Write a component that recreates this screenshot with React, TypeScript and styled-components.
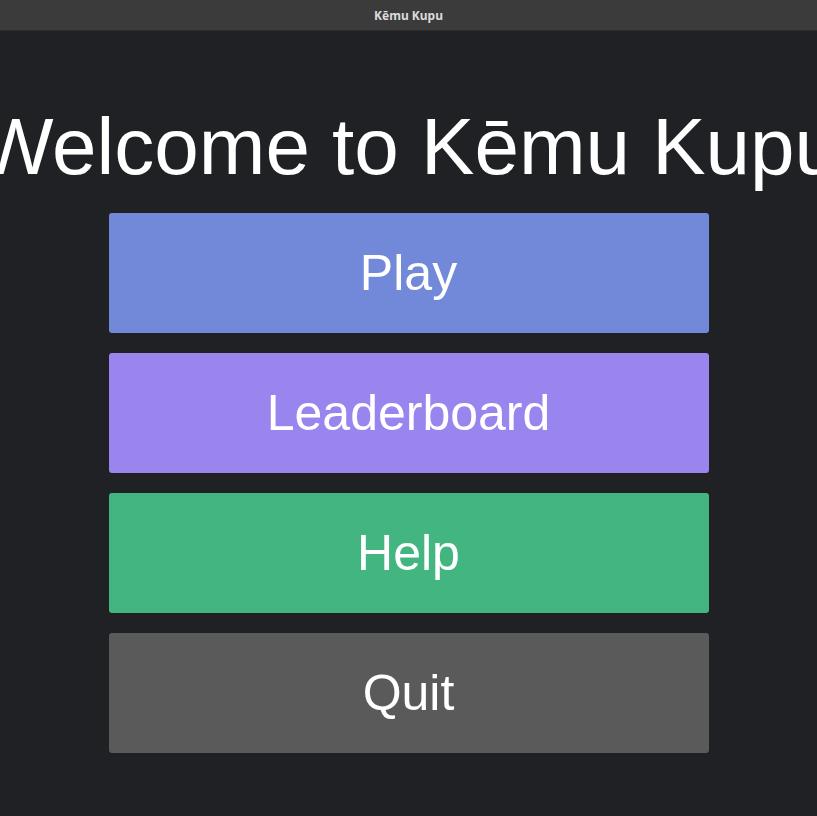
import React from "react";
import styled, { createGlobalStyle } from "styled-components";

const Global = createGlobalStyle`
  html, body {
    margin: 0;
    padding: 0;
    background: #1f2124;
    overflow: hidden;
  }
  #root {
    width: 817px;
    height: 816px;
  }
`;

const Window = styled.div`
  width: 817px;
  height: 816px;
  display: flex;
  flex-direction: column;
  background: #1f2124;
  overflow: hidden;
`;

const TitleBar = styled.div`
  height: 30px;
  flex: none;
  display: flex;
  align-items: center;
  justify-content: center;
  background: #3b3b3b;
  border-bottom: 1px solid #2e2e2e;
  color: #dcdcdc;
  font-family: "Noto Sans", "DejaVu Sans", sans-serif;
  font-weight: 700;
  font-size: 12px;
`;

const Content = styled.main`
  flex: 1;
  display: flex;
  flex-direction: column;
  align-items: center;
  padding-top: 76px;
`;

const Heading = styled.h1`
  margin: 0 0 26px;
  font-family: "Liberation Sans", Arial, sans-serif;
  font-weight: 400;
  font-size: 80px;
  line-height: 80px;
  color: #ffffff;
  white-space: nowrap;
  text-align: center;
`;

const Menu = styled.nav`
  display: flex;
  flex-direction: column;
  gap: 20px;
`;

const MenuButton = styled.button<{ $bg: string }>`
  width: 600px;
  height: 120px;
  border: none;
  border-radius: 3px;
  background: ${(p) => p.$bg};
  color: #ffffff;
  font-family: "Liberation Sans", Arial, sans-serif;
  font-size: 50px;
  padding: 0;
  display: flex;
  align-items: center;
  justify-content: center;
  cursor: pointer;
`;

const items = [
  { label: "Play", bg: "#7289da" },
  { label: "Leaderboard", bg: "#9a84ee" },
  { label: "Help", bg: "#43b581" },
  { label: "Quit", bg: "#5a5a5a" },
];

export default function App() {
  return (
    <>
      <Global />
      <Window>
        <TitleBar>Kēmu Kupu</TitleBar>
        <Content>
          <Heading>Welcome to Kēmu Kupu</Heading>
          <Menu>
            {items.map((it) => (
              <MenuButton key={it.label} $bg={it.bg}>
                {it.label}
              </MenuButton>
            ))}
          </Menu>
        </Content>
      </Window>
    </>
  );
}
